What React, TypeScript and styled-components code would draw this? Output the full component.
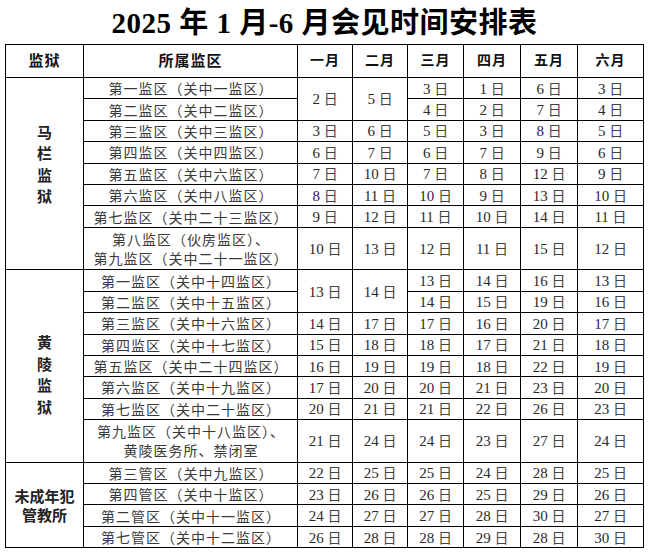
import { createGlobalStyle, styled } from "styled-components";

const GlobalStyle = createGlobalStyle`
  html, body {
    margin: 0;
    padding: 0;
    background: #fff;
  }
  body {
    font-family: "Liberation Serif", "Noto Sans CJK SC", serif;
    color: #111;
  }
`;

const Page = styled.div`
  width: 649px;
  height: 555px;
  overflow: hidden;
`;

const Title = styled.h1`
  margin: 0;
  height: 44px;
  line-height: 46px;
  text-align: center;
  font-family: "Liberation Serif", "Noto Sans CJK SC", serif;
  font-size: 29px;
  font-weight: bold;
  color: #000;
  letter-spacing: 0.5px;
`;

const Table = styled.table`
  margin-left: 5px;
  width: 639px;
  table-layout: fixed;
  border-collapse: collapse;
  border: 1px solid #000;
`;

const HeadCell = styled.th<{ $size?: number }>`
  height: 32px;
  padding: 0;
  border: 1px solid #000;
  font-family: "Liberation Serif", "Noto Sans CJK SC", serif;
  font-size: ${({ $size }) => $size ?? 15}px;
  font-weight: bold;
  line-height: 16px;
  letter-spacing: 1px;
  text-align: center;
  vertical-align: middle;
  color: #111;
`;

const PrisonCell = styled.td<{ $lineHeight: number; $top?: number; $bottom?: number }>`
  padding: ${({ $top }) => $top ?? 0}px 0 ${({ $bottom }) => $bottom ?? 0}px;
  border: 1px solid #000;
  font-family: "Noto Sans CJK SC", sans-serif;
  font-size: 15px;
  font-weight: bold;
  line-height: ${({ $lineHeight }) => $lineHeight}px;
  text-align: center;
  vertical-align: middle;
  color: #222;
`;

const AreaCell = styled.td<{ $double?: boolean }>`
  height: ${({ $double }) => ($double ? 41.6 : 20.4)}px;
  padding: 0 0 0 1px;
  border: 1px solid #000;
  font-family: "Noto Sans CJK SC", sans-serif;
  font-size: 14px;
  line-height: ${({ $double }) => ($double ? 19 : 16)}px;
  letter-spacing: 1px;
  text-align: center;
  vertical-align: middle;
  white-space: nowrap;
  color: #3a3a3a;
`;

const DayCell = styled.td`
  padding: 0;
  border: 1px solid #000;
  font-family: "Liberation Serif", "Noto Sans CJK SC", serif;
  font-size: 15px;
  line-height: 16px;
  text-align: center;
  vertical-align: middle;
  white-space: nowrap;
  color: #2a2a2a;
`;

const Unit = styled.span`
  font-family: "Noto Sans CJK SC", sans-serif;
  font-size: 14px;
  line-height: 16px;
  color: #444;
`;

type Day = { d: number; span?: number } | null;

type AreaRow = {
  area: string[];
  days: Day[];
};

type Group = {
  name: string[];
  lineHeight: number;
  top?: number;
  bottom?: number;
  rows: AreaRow[];
};

const d = (...nums: number[]): Day[] => nums.map((n) => ({ d: n }));

const groups: Group[] = [
  {
    name: ["马", "栏", "监", "狱"],
    lineHeight: 21.5,
    bottom: 20,
    rows: [
      {
        area: ["第一监区（关中一监区）"],
        days: [{ d: 2, span: 2 }, { d: 5, span: 2 }, ...d(3, 1, 6, 3)],
      },
      { area: ["第二监区（关中二监区）"], days: [null, null, ...d(4, 2, 7, 4)] },
      { area: ["第三监区（关中三监区）"], days: d(3, 6, 5, 3, 8, 5) },
      { area: ["第四监区（关中四监区）"], days: d(6, 7, 6, 7, 9, 6) },
      { area: ["第五监区（关中六监区）"], days: d(7, 10, 7, 8, 12, 9) },
      { area: ["第六监区（关中八监区）"], days: d(8, 11, 10, 9, 13, 10) },
      { area: ["第七监区（关中二十三监区）"], days: d(9, 12, 11, 10, 14, 11) },
      {
        area: ["第八监区（伙房监区）、", "第九监区（关中二十一监区）"],
        days: d(10, 13, 12, 11, 15, 12),
      },
    ],
  },
  {
    name: ["黄", "陵", "监", "狱"],
    lineHeight: 21.5,
    top: 17,
    rows: [
      {
        area: ["第一监区（关中十四监区）"],
        days: [{ d: 13, span: 2 }, { d: 14, span: 2 }, ...d(13, 14, 16, 13)],
      },
      { area: ["第二监区（关中十五监区）"], days: [null, null, ...d(14, 15, 19, 16)] },
      { area: ["第三监区（关中十六监区）"], days: d(14, 17, 17, 16, 20, 17) },
      { area: ["第四监区（关中十七监区）"], days: d(15, 18, 18, 17, 21, 18) },
      { area: ["第五监区（关中二十四监区）"], days: d(16, 19, 19, 18, 22, 19) },
      { area: ["第六监区（关中十九监区）"], days: d(17, 20, 20, 21, 23, 20) },
      { area: ["第七监区（关中二十监区）"], days: d(20, 21, 21, 22, 26, 23) },
      {
        area: ["第九监区（关中十八监区）、", "黄陵医务所、禁闭室"],
        days: d(21, 24, 24, 23, 27, 24),
      },
    ],
  },
  {
    name: ["未成年犯", "管教所"],
    lineHeight: 19,
    rows: [
      { area: ["第三管区（关中九监区）"], days: d(22, 25, 25, 24, 28, 25) },
      { area: ["第四管区（关中十监区）"], days: d(23, 26, 26, 25, 29, 26) },
      { area: ["第二管区（关中十一监区）"], days: d(24, 27, 27, 28, 30, 27) },
      { area: ["第七管区（关中十二监区）"], days: d(26, 28, 28, 29, 28, 30) },
    ],
  },
];

const months = ["一月", "二月", "三月", "四月", "五月", "六月"];
const colWidths = [78, 214, 55, 55, 56, 57, 57, 66];

export default function App() {
  return (
    <Page>
      <GlobalStyle />
      <Title>2025 年 1 月-6 月会见时间安排表</Title>
      <Table>
        <colgroup>
          {colWidths.map((w, i) => (
            <col key={i} style={{ width: w }} />
          ))}
        </colgroup>
        <thead>
          <tr>
            <HeadCell>监狱</HeadCell>
            <HeadCell>所属监区</HeadCell>
            {months.map((m) => (
              <HeadCell key={m} $size={14}>
                {m}
              </HeadCell>
            ))}
          </tr>
        </thead>
        <tbody>
          {groups.map((group) =>
            group.rows.map((row, ri) => (
              <tr key={`${group.name.join("")}-${ri}`}>
                {ri === 0 && (
                  <PrisonCell
                    rowSpan={group.rows.length}
                    $lineHeight={group.lineHeight}
                    $top={group.top}
                    $bottom={group.bottom}
                  >
                    {group.name.map((line) => (
                      <div key={line}>{line}</div>
                    ))}
                  </PrisonCell>
                )}
                <AreaCell $double={row.area.length > 1}>
                  {row.area.map((line) => (
                    <div key={line}>{line}</div>
                  ))}
                </AreaCell>
                {row.days.map((day, di) =>
                  day ? (
                    <DayCell key={di} rowSpan={day.span}>
                      {day.d} <Unit>日</Unit>
                    </DayCell>
                  ) : null
                )}
              </tr>
            ))
          )}
        </tbody>
      </Table>
    </Page>
  );
}
